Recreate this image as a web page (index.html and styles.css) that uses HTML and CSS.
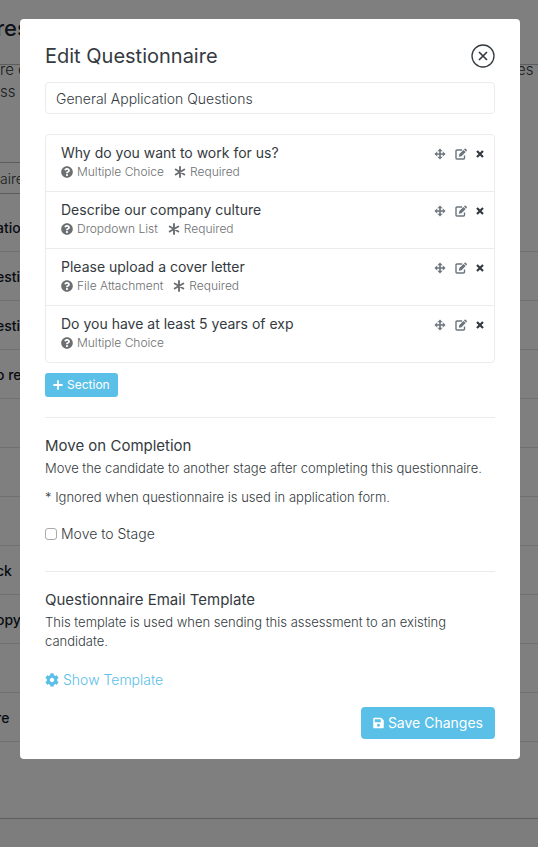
FILE: index.html
```html
<!DOCTYPE html>
<html lang="en">
<head>
<meta charset="utf-8">
<meta name="viewport" content="width=device-width, initial-scale=1">
<title>Edit Questionnaire</title>
<link rel="stylesheet" href="styles.css">
</head>
<body>
<svg class="sprite" aria-hidden="true">
  <symbol id="question" viewBox="0 0 512 512"><path d="M504 256c0 136.997-111.043 248-248 248S8 392.997 8 256C8 119.083 119.043 8 256 8s248 111.083 248 248zM262.655 90c-54.497 0-89.255 22.957-116.549 63.758-3.536 5.286-2.353 12.415 2.715 16.258l34.699 26.31c5.205 3.947 12.621 3.008 16.665-2.122 17.864-22.658 30.113-35.797 57.303-35.797 20.429 0 45.698 13.148 45.698 32.958 0 14.976-12.363 22.667-32.534 33.976C247.128 238.528 216 254.941 216 296v4c0 6.627 5.373 12 12 12h56c6.627 0 12-5.373 12-12v-1.333c0-28.462 83.186-29.647 83.186-106.667 0-58.002-60.165-102-116.531-102zM256 338c-25.365 0-46 20.635-46 46 0 25.364 20.635 46 46 46s46-20.636 46-46c0-25.365-20.635-46-46-46z"/></symbol>
  <symbol id="asterisk" viewBox="0 0 12 12"><path d="M6 1v10M1.700 3.500l8.600 5M1.700 8.500l8.600-5" fill="none" stroke="currentColor" stroke-width="1.900" stroke-linecap="round"/></symbol>
  <symbol id="move" viewBox="0 0 12 12"><path d="M6 .4l2.600 2.800H6.800v2H8.800V3.400L11.600 6 8.800 8.600V6.800H6.800v2h1.800L6 11.600 3.400 8.800h1.800v-2h-2v1.800L.4 6 3.200 3.400v1.800h2v-2H3.400z"/></symbol>
  <symbol id="edit" viewBox="0 0 12 12"><path d="M7.200 2H1.900q-.9 0-.9.9v7.200q0 .9.900.9h6.700q.9 0 .9-.9V7.500" fill="none" stroke="currentColor" stroke-width="1.400"/><path d="M3.800 8.700l.5-2.700 4.200-4.100 2.200 2.200-4.200 4.100zM9 1.400l.6-.6q.6-.5 1.100 0l1 1q.5.500 0 1.100l-.6.600z"/></symbol>
  <symbol id="times" viewBox="0 0 8 8"><path d="M1 1l6 6M7 1L1 7" fill="none" stroke="currentColor" stroke-width="2.200"/></symbol>
  <symbol id="plus" viewBox="0 0 10 10"><path d="M5 1v8M1 5h8" fill="none" stroke="currentColor" stroke-width="1.800" stroke-linecap="round"/></symbol>
  <symbol id="close" viewBox="0 0 24 24"><path d="M8 8l8 8M16 8l-8 8" fill="none" stroke="currentColor" stroke-width="1.700"/><circle cx="12" cy="12" r="11" fill="none" stroke="currentColor" stroke-width="1.300"/></symbol>
  <symbol id="cog" viewBox="0 0 512 512"><path d="M487.4 315.7l-42.6-24.6c4.3-23.2 4.3-47 0-70.2l42.6-24.6c4.9-2.8 7.1-8.6 5.500-14-11.1-35.6-30-67.8-54.7-94.6-3.800-4.100-10-5.100-14.800-2.300L380.800 110c-17.900-15.400-38.500-27.300-60.800-35.100V25.800c0-5.600-3.900-10.500-9.400-11.700-36.700-8.200-74.300-7.800-109.200 0-5.500 1.200-9.400 6.100-9.400 11.700V75c-22.200 7.900-42.800 19.800-60.800 35.100L88.700 85.500c-4.900-2.800-11-1.900-14.800 2.300-24.700 26.700-43.600 58.900-54.700 94.600-1.700 5.400.6 11.200 5.500 14L67.300 221c-4.300 23.200-4.300 47 0 70.200l-42.600 24.600c-4.900 2.800-7.100 8.600-5.500 14 11.100 35.600 30 67.800 54.700 94.600 3.800 4.100 10 5.100 14.800 2.300l42.600-24.600c17.900 15.400 38.500 27.300 60.800 35.100v49.200c0 5.600 3.900 10.500 9.400 11.700 36.700 8.200 74.300 7.800 109.200 0 5.500-1.200 9.400-6.100 9.400-11.700v-49.200c22.200-7.900 42.800-19.800 60.800-35.100l42.600 24.600c4.900 2.800 11 1.900 14.800-2.300 24.700-26.700 43.600-58.900 54.700-94.600 1.500-5.500-.7-11.300-5.600-14.100zM256 336c-44.100 0-80-35.900-80-80s35.900-80 80-80 80 35.900 80 80-35.900 80-80 80z"/></symbol>
  <symbol id="save" viewBox="0 0 448 512"><path d="M433.941 129.941l-83.882-83.882A48 48 0 0 0 316.118 32H48C21.490 32 0 53.490 0 80v352c0 26.510 21.490 48 48 48h352c26.510 0 48-21.490 48-48V163.882a48 48 0 0 0-14.059-33.941zM224 416c-35.346 0-64-28.654-64-64 0-35.346 28.654-64 64-64s64 28.654 64 64c0 35.346-28.654 64-64 64zm96-304.520V212c0 6.627-5.373 12-12 12H76c-6.627 0-12-5.373-12-12V108c0-6.627 5.373-12 12-12h228.520c3.183 0 6.235 1.264 8.485 3.515l3.480 3.480A11.996 11.996 0 0 1 320 111.480z"/></symbol>
</svg>

<div class="page" aria-hidden="true">
  <div class="page-title">res</div>
  <div class="page-intro">
    <div class="intro-line"><span>re c</span><span class="intro-end">es o</span></div>
    <div class="intro-line"><span>ss c</span></div>
  </div>
  <div class="page-search">aire</div>
  <ul class="page-rows">
    <li>atio</li>
    <li>esti</li>
    <li>esti</li>
    <li>o re</li>
    <li></li>
    <li></li>
    <li></li>
    <li>ck</li>
    <li>opy)</li>
    <li></li>
    <li>re</li>
  </ul>
  <div class="page-footer"></div>
</div>

<div class="backdrop">
  <form class="modal" role="dialog" aria-labelledby="modal-title">
    <header class="modal-header">
      <h1 id="modal-title">Edit Questionnaire</h1>
      <button type="button" class="icon-button" aria-label="Close"><svg class="icon-close"><use href="#close"/></svg></button>
    </header>
    <input class="name-input" type="text" aria-label="Questionnaire name" value="General Application Questions">

    <ul class="questions">
      <li class="question">
        <div class="question-text">
          <h2>Why do you want to work for us?</h2>
          <p class="meta"><span class="tag"><svg class="icon"><use href="#question"/></svg>Multiple Choice</span><span class="tag"><svg class="icon"><use href="#asterisk"/></svg>Required</span></p>
        </div>
        <div class="actions">
          <button type="button" class="icon-button" aria-label="Move"><svg class="icon"><use href="#move"/></svg></button>
          <button type="button" class="icon-button" aria-label="Edit"><svg class="icon"><use href="#edit"/></svg></button>
          <button type="button" class="icon-button remove" aria-label="Remove"><svg class="icon-small"><use href="#times"/></svg></button>
        </div>
      </li>
      <li class="question">
        <div class="question-text">
          <h2>Describe our company culture</h2>
          <p class="meta"><span class="tag"><svg class="icon"><use href="#question"/></svg>Dropdown List</span><span class="tag"><svg class="icon"><use href="#asterisk"/></svg>Required</span></p>
        </div>
        <div class="actions">
          <button type="button" class="icon-button" aria-label="Move"><svg class="icon"><use href="#move"/></svg></button>
          <button type="button" class="icon-button" aria-label="Edit"><svg class="icon"><use href="#edit"/></svg></button>
          <button type="button" class="icon-button remove" aria-label="Remove"><svg class="icon-small"><use href="#times"/></svg></button>
        </div>
      </li>
      <li class="question">
        <div class="question-text">
          <h2>Please upload a cover letter</h2>
          <p class="meta"><span class="tag"><svg class="icon"><use href="#question"/></svg>File Attachment</span><span class="tag"><svg class="icon"><use href="#asterisk"/></svg>Required</span></p>
        </div>
        <div class="actions">
          <button type="button" class="icon-button" aria-label="Move"><svg class="icon"><use href="#move"/></svg></button>
          <button type="button" class="icon-button" aria-label="Edit"><svg class="icon"><use href="#edit"/></svg></button>
          <button type="button" class="icon-button remove" aria-label="Remove"><svg class="icon-small"><use href="#times"/></svg></button>
        </div>
      </li>
      <li class="question">
        <div class="question-text">
          <h2>Do you have at least 5 years of exp</h2>
          <p class="meta"><span class="tag"><svg class="icon"><use href="#question"/></svg>Multiple Choice</span></p>
        </div>
        <div class="actions">
          <button type="button" class="icon-button" aria-label="Move"><svg class="icon"><use href="#move"/></svg></button>
          <button type="button" class="icon-button" aria-label="Edit"><svg class="icon"><use href="#edit"/></svg></button>
          <button type="button" class="icon-button remove" aria-label="Remove"><svg class="icon-small"><use href="#times"/></svg></button>
        </div>
      </li>
    </ul>
    <button type="button" class="button button-small"><svg class="icon-plus"><use href="#plus"/></svg>Section</button>

    <section class="section">
      <h2>Move on Completion</h2>
      <p>Move the candidate to another stage after completing this questionnaire.</p>
      <p class="note">* Ignored when questionnaire is used in application form.</p>
      <label class="check"><input type="checkbox">Move to Stage</label>
    </section>

    <section class="section">
      <h2>Questionnaire Email Template</h2>
      <p>This template is used when sending this assessment to an existing candidate.</p>
      <a class="template-link" href="#template"><svg class="icon-cog"><use href="#cog"/></svg>Show Template</a>
    </section>

    <footer class="modal-footer">
      <button type="submit" class="button"><svg class="icon-save"><use href="#save"/></svg>Save Changes</button>
    </footer>
  </form>
</div>
</body>
</html>
```
FILE: styles.css
```css
* {
  box-sizing: border-box;
}

body,
h1,
h2,
p,
ul {
  margin: 0;
  padding: 0;
}

body {
  font-family: Inter, "Liberation Sans", sans-serif;
  font-size: 14px;
  font-weight: 300;
  line-height: 20px;
  color: #343a40;
  background: #fff;
}

ul {
  list-style: none;
}

svg {
  display: block;
  flex: none;
  fill: currentColor;
}

.sprite {
  position: absolute;
  width: 0;
  height: 0;
}

/* Page behind the dialog */
.page {
  min-height: 100vh;
  overflow: hidden;
  display: flex;
  flex-direction: column;
  white-space: nowrap;
}

.page-title {
  height: 65px;
  padding-top: 13px;
  border-bottom: 1px solid #bbb;
  font-size: 22px;
  font-weight: 500;
  line-height: 30px;
  text-indent: -4px;
  color: #1d2733;
}

.page-intro {
  height: 97px;
  font-size: 15px;
  line-height: 22px;
  margin-top: -6px;
}

.intro-line {
  display: flex;
  justify-content: space-between;
}

.intro-end {
  width: 21px;
  overflow: hidden;
}

.page-search {
  margin-top: 6px;
  height: 32px;
  border: 1px solid #bbb;
  border-left: 0;
  line-height: 32px;
  width: 50%;
}

.page-rows {
  margin-top: 9px;
}

.page-rows li {
  height: 49px;
  border-bottom: 1px solid #e0e0e0;
  font-weight: 500;
  line-height: 50px;
  text-indent: -4px;
  color: #101827;
}

.page-footer {
  flex: 1;
  margin-top: 76px;
  border-top: 1px solid #bbb;
  background: #fafafa;
}

/* Dialog */
.backdrop {
  position: fixed;
  inset: 0;
  overflow: auto;
  background: rgba(0, 0, 0, 0.5);
}

.modal {
  margin: 19px 18px 19px 20px;
  padding: 25px 25px 20px;
  border-radius: 4px;
  background: #fff;
}

.modal-header {
  display: flex;
  justify-content: space-between;
  align-items: center;
  height: 24px;
  margin-bottom: 14px;
}

.modal-header h1 {
  font-size: 20px;
  font-weight: 400;
  line-height: 24px;
}

.icon-button {
  display: block;
  padding: 0;
  border: 0;
  background: none;
  color: #6c757d;
}

.modal-header .icon-button,
.remove {
  color: #343a40;
}

.icon-close {
  width: 24px;
  height: 24px;
}

.icon {
  width: 12px;
  height: 12px;
}

.icon-small {
  width: 8px;
  height: 8px;
}

.icon-plus {
  width: 10px;
  height: 10px;
}

.name-input {
  display: block;
  width: 100%;
  height: 32px;
  margin-bottom: 20px;
  padding: 0 10px;
  border: 1px solid #e9ebec;
  border-radius: 4px;
  font: inherit;
  color: inherit;
  background: #fff;
}

.questions {
  margin-bottom: 10px;
  border: 1px solid #e9ebec;
  border-radius: 4px;
}

.question {
  display: flex;
  justify-content: space-between;
  padding: 8px 10px 10px 15px;
}

.question + .question {
  border-top: 1px solid #e9ebec;
}

.question h2 {
  font-size: 14px;
  font-weight: 400;
  line-height: 20px;
}

.meta {
  display: flex;
  gap: 10px;
  font-size: 12px;
  line-height: 18px;
  color: #6c6f72;
}

.tag {
  display: flex;
  align-items: center;
  gap: 4px;
}

.actions {
  display: flex;
  align-items: center;
  gap: 9px;
  height: 22px;
}

.button {
  display: flex;
  align-items: center;
  gap: 4px;
  height: 32px;
  padding: 0 12px;
  border: 0;
  border-radius: 4px;
  font: inherit;
  font-weight: 400;
  color: #fff;
  background: #5bc0e7;
}

.button-small {
  height: 24px;
  padding: 0 8px;
  border-radius: 3px;
  font-size: 12px;
}

.section {
  margin-top: 20px;
  padding-top: 17px;
  border-top: 1px solid #e9ebec;
}

.section h2 {
  margin-bottom: 2px;
  font-size: 15px;
  font-weight: 400;
  line-height: 22px;
}

.section p {
  font-size: 13px;
  line-height: 19px;
}

.section .note {
  margin-top: 10px;
}

.check {
  display: flex;
  align-items: center;
  gap: 4px;
  margin-top: 17px;
  margin-bottom: 27px;
}

.check input {
  appearance: none;
  width: 12px;
  height: 12px;
  margin: 0;
  border: 1px solid #aaa;
  border-radius: 3px;
  background: #fff;
}

.check input:checked {
  background: #5bc0e7;
}

.template-link {
  display: flex;
  align-items: center;
  gap: 4px;
  width: max-content;
  margin-top: 19px;
  color: #5bc0e7;
  text-decoration: none;
}

.icon-cog {
  width: 14px;
  height: 14px;
}

.icon-save {
  width: 11px;
  height: 12px;
}

.modal-footer {
  display: flex;
  justify-content: flex-end;
  margin-top: 17px;
}
```
